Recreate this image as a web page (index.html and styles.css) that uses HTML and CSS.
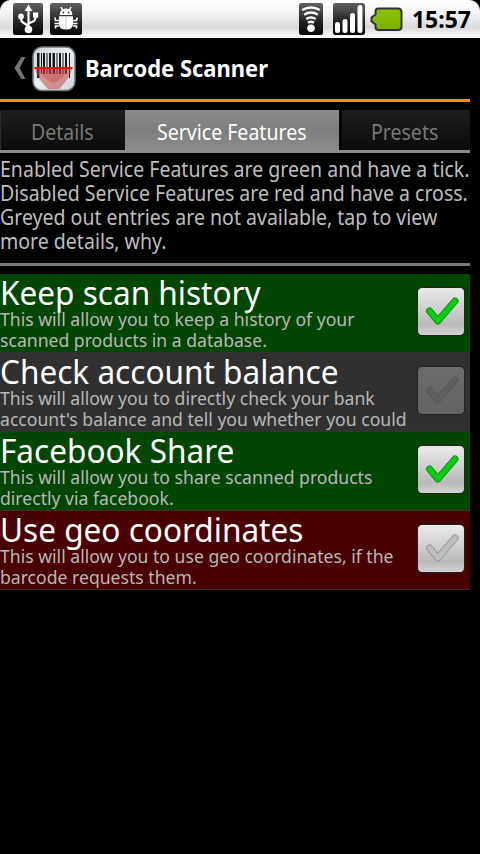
FILE: index.html
```
<!DOCTYPE html>
<html lang="en">
<head>
<meta charset="utf-8">
<title>Barcode Scanner</title>
<link rel="stylesheet" href="styles.css">
</head>
<body>
<svg class="defs" width="0" height="0">
  <defs>
    <linearGradient id="dark" x1="0" y1="0" x2="0" y2="1"><stop offset="0" stop-color="#626262"/><stop offset=".55" stop-color="#252525"/><stop offset="1" stop-color="#050505"/></linearGradient>
    <linearGradient id="green" x1="0" y1="0" x2="0" y2="1"><stop offset="0" stop-color="#8cc400"/><stop offset="1" stop-color="#79ad00"/></linearGradient>
    <linearGradient id="glass" x1="0" y1="0" x2="1" y2="1"><stop offset="0" stop-color="#cbd2d6"/><stop offset=".5" stop-color="#e9eef1"/><stop offset="1" stop-color="#cdd3d6"/></linearGradient>
    <path id="check" d="M11.500 23L19.800 33L37 13"/>
  </defs>
</svg>
<header class="status">
  <div class="status-left">
    <svg width="30" height="32" viewBox="0 0 30 32"><rect width="30" height="32" rx="2.5" fill="url(#dark)"/><g fill="none" stroke="#fff" stroke-width="2.200"><path d="M15.500 6V26M15.500 23L10 19.500Q8 18.400 8 15M15.500 20.500L21 18Q22.500 17 22.500 13"/></g><g fill="#fff"><path d="M15.500 1.500L19.500 8H11.500Z"/><circle cx="8" cy="13.500" r="2.900"/><rect x="20" y="9.500" width="5.200" height="5.200"/><circle cx="15.500" cy="26.500" r="3.800"/></g></svg>
    <svg width="32" height="32" viewBox="0 0 32 32"><rect width="32" height="32" rx="2.500" fill="url(#dark)"/><g fill="#fff"><path d="M9.500 12Q10 5.500 16 5.500T22.500 12Z"/><path d="M9 13.200H23V21Q23 26.500 16 26.500T9 21Z"/></g><g stroke="#fff" stroke-width="1.500" fill="none"><path d="M12.500 7L11 4M19.500 7L21 4"/></g><g stroke="#fff" stroke-width="1.600" fill="none"><path d="M9 17.500H5.500L4.800 14.500M9 20.500H4.500M9 23H5.500V25.500M23 17.500H26.500L27.200 14.500M23 20.500H27.500M23 23H26.500V25.500"/></g><path d="M16 13.500V26" stroke="#ccc"/><circle cx="13.300" cy="9.500" r=".9" fill="#444"/><circle cx="18.700" cy="9.500" r=".9" fill="#444"/></svg>
  </div>
  <div class="status-right">
    <svg width="24" height="32" viewBox="0 0 24 32"><rect width="24" height="32" rx="2.500" fill="url(#dark)"/><g fill="none" stroke="#fff" stroke-width="2.500"><path d="M3.200 7Q12 1.800 20.800 7M5.200 11.700Q12 7.500 18.800 11.700M7.200 16Q12 12.800 16.800 16M9 19.700Q12 18 15 19.700"/></g><circle cx="12" cy="25.200" r="3.800" fill="#fff"/></svg>
    <svg class="signal" width="32" height="32" viewBox="0 0 32 32"><rect width="32" height="32" rx="2.500" fill="url(#dark)"/><g fill="#fff"><rect x="2" y="19" width="5" height="11" rx="2.500"/><rect x="9.500" y="16" width="5" height="14" rx="2.500"/><rect x="17" y="10" width="5" height="20" rx="2.500"/><rect x="24.500" y="2" width="5" height="28" rx="2.500"/></g></svg>
    <svg class="battery" width="33" height="25" viewBox="0 0 33 25"><path d="M8.500 1.500H28Q31.500 1.500 31.500 5V19.500Q31.500 23 28 23H8.500Q5.500 23 5.500 20V17.500L1.500 14.500V10.500L5.500 7.500V4.500Q5.500 1.500 8.500 1.500Z" fill="url(#green)" stroke="#333039" stroke-width="2" stroke-linejoin="round"/></svg>
    <span class="clock"><span class="fit">15:57</span></span>
  </div>
</header>
<main>
  <div class="bar">
    <svg class="back" width="12" height="22" viewBox="0 0 12 22"><path d="M7.500 0H11.500L5.500 11L11.500 22H7.500L.5 11Z" fill="#777"/></svg>
    <svg class="logo" width="44" height="46" viewBox="0 0 44 46"><rect x="1" y="1" width="42" height="43.500" rx="9" fill="url(#glass)" stroke="#71767a" stroke-width="1.500"/><g fill="#17191b"><path d="M5 7h2.500v25H5zM9 7h1v21H9zM11 7h2v21h-2zM14.500 7h1v21h-1zM17 7h2v21h-2zM20.500 7h2.500v21h-2.500zM24.500 7h1v21h-1zM27 7h2v21h-2zM30.500 7h1v21h-1zM33 7h2v21h-2zM37 7h1v25h-1z"/></g><path d="M3 23H40Q38 32 27 43H16Q5 32 3 23Z" fill="#c84040" opacity=".52"/><path d="M7 23H36Q33 32 21.500 37Q9 32 7 23Z" fill="#b83030" opacity=".3"/><path d="M2.500 22H40.500" stroke="#e81408" stroke-width="2"/></svg>
    <h1><span class="fit">Barcode Scanner</span></h1>
  </div>
  <nav class="tabs">
    <a class="tab t1"><span class="fit">Details</span></a>
    <a class="tab t2 active"><span class="fit">Service Features</span></a>
    <a class="tab t3"><span class="fit">Presets</span></a>
  </nav>
  <p class="intro">
    <span class="fit">Enabled Service Features are green and have a tick.</span>
    <span class="fit">Disabled Service Features are red and have a cross.</span>
    <span class="fit">Greyed out entries are not available, tap to view</span>
    <span class="fit">more details, why.</span>
  </p>
  <ul class="list">
    <li class="row on">
      <div class="copy"><h2><span class="fit">Keep scan history</span></h2><p><span class="fit">This will allow you to keep a history of your</span><span class="fit">scanned products in a database.</span></p></div>
      <svg class="box" viewBox="0 0 46 47"><use href="#check" class="edge"/><use href="#check" class="mark"/></svg>
    </li>
    <li class="row disabled">
      <div class="copy"><h2><span class="fit">Check account balance</span></h2><p><span class="fit">This will allow you to directly check your bank</span><span class="fit">account's balance and tell you whether you could</span></p></div>
      <svg class="box" viewBox="0 0 46 47"><use href="#check" class="edge"/><use href="#check" class="mark"/></svg>
    </li>
    <li class="row on">
      <div class="copy"><h2><span class="fit">Facebook Share</span></h2><p><span class="fit">This will allow you to share scanned products</span><span class="fit">directly via facebook.</span></p></div>
      <svg class="box" viewBox="0 0 46 47"><use href="#check" class="edge"/><use href="#check" class="mark"/></svg>
    </li>
    <li class="row off">
      <div class="copy"><h2><span class="fit">Use geo coordinates</span></h2><p><span class="fit">This will allow you to use geo coordinates, if the</span><span class="fit">barcode requests them.</span></p></div>
      <svg class="box" viewBox="0 0 46 47"><use href="#check" class="edge"/><use href="#check" class="mark"/></svg>
    </li>
  </ul>
</main>
</body>
</html>
```
FILE: styles.css
```
* { box-sizing: border-box; margin: 0; padding: 0; }
body { width: 480px; height: 854px; background: #000; color: #fff; font-family: "Noto Sans", "Open Sans", sans-serif; overflow: hidden; }
svg { display: block; flex: none; }
.defs { position: absolute; }
.fit { display: block; width: max-content; white-space: nowrap; transform-origin: 0 50%; }
.status { height: 38px; padding: 3px 0 0 13px; display: flex; justify-content: space-between; border-radius: 11px 11px 0 0; background: linear-gradient(#fff, #f4f4f4 35%, #dadada 72%, #e8e8e8 82%, #fcfcfc); }
.status-left { display: flex; gap: 7px; }
.status-right { display: flex; width: 181px; }
.signal { margin-left: 10px; }
.battery { margin: 4px 0 0 5px; }
.clock { margin-left: 9px; color: #000; font-weight: 700; font-size: 24px; line-height: 32px; }
.clock .fit { transform: scaleX(.955); }
main { width: 470px; }
.bar { height: 64px; border-bottom: 3px solid #ff8e00; display: flex; padding: 8px 0 0 14px; }
.back { margin-top: 11px; }
.logo { margin-left: 6px; }
.bar h1 { margin-left: 9px; font-size: 23px; line-height: 45px; }
.bar .fit { transform: scaleX(.955); }
.tabs { display: flex; height: 43px; margin-top: 8px; border-bottom: 3px solid #8c8c8c; font-size: 21px; line-height: 44px; color: #787878; }
.tab { height: 40px; background: linear-gradient(#1d1d1e, #0b0b0b); border-left: 1px solid #2a2a2a; }
.tab .fit { transform: scaleX(.93); }
.t1 { width: 125px; padding-left: 30px; }
.t2 { width: 214px; padding-left: 32px; }
.t3 { width: 131px; padding-left: 29px; border-left: 3px solid #050505; }
.active { height: 41px; border: 0; background: linear-gradient(#8b8b8b, #7e7e7e 50%, #8c8c8c); color: #fff; }
.intro { height: 113px; padding-top: 4px; border-bottom: 3px solid #7b7b7b; font-size: 21px; line-height: 24px; color: #bebebe; }
.intro .fit { transform: scaleX(.93); }
.list { margin-top: 8px; list-style: none; }
.row { height: 79px; display: flex; justify-content: space-between; border-bottom: 1px solid #333; }
.on { background: #004600; }
.off { background: #490000; }
.disabled { background: #303030; }
.row h2 { font-size: 33px; font-weight: 400; line-height: 37px; height: 35px; }
.row h2 .fit { transform: scaleX(.956); }
.row p { font-size: 18px; line-height: 21px; color: #b8b8b8; }
.row p .fit { transform: scaleX(.978); }
.box { width: 48px; height: 49px; margin: 13px 5px 0 0; border: 1px solid #222; border-radius: 5px; background: linear-gradient(#eaeaea, #bababa 78%, #d2d2d2); }
.box use { fill: none; stroke-linecap: round; stroke-linejoin: round; }
.edge { stroke: #208a28; stroke-width: 7px; }
.mark { stroke: #00d008; stroke-width: 5px; }
.off .edge { stroke: #999; }
.off .mark { stroke: #bebebe; }
.disabled .box { background: linear-gradient(#6c6a6c, #646264); }
.disabled .edge { stroke: #575957; }
.disabled .mark { stroke: #5d5f5d; }
```
